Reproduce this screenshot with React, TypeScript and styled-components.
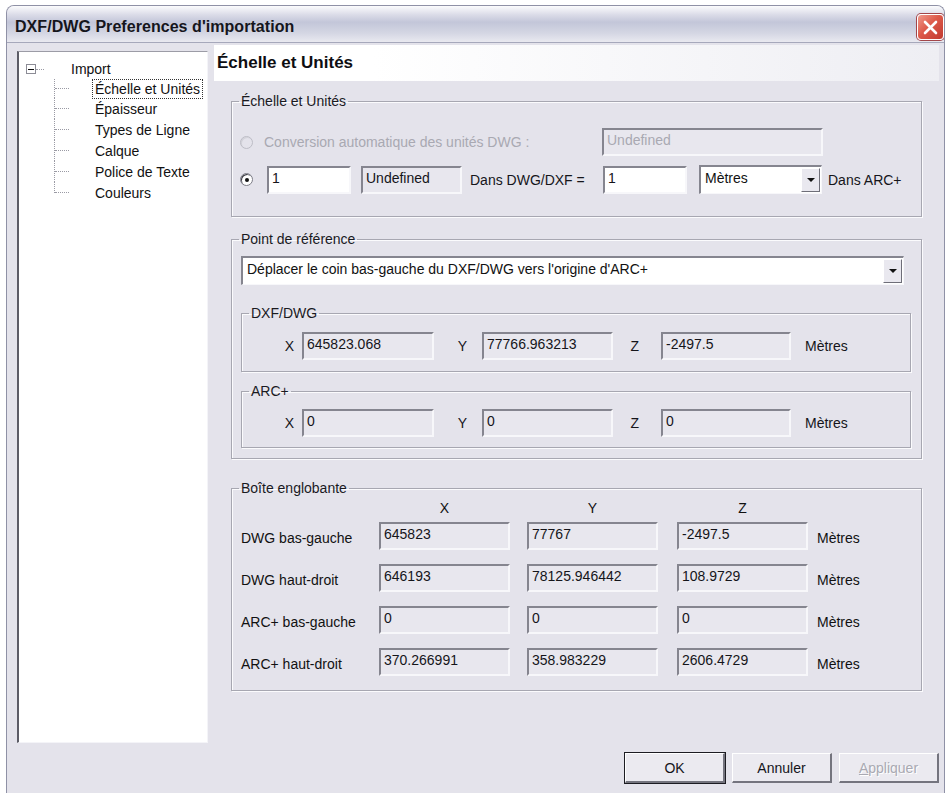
import React from "react";
import styled, { createGlobalStyle } from "styled-components";

const GlobalStyle = createGlobalStyle`
  html, body {
    margin: 0;
    padding: 0;
    background: #ffffff;
  }
  body {
    font-family: "Liberation Sans", Arial, sans-serif;
    font-size: 14px;
    color: #111111;
  }
`;

const Window = styled.div`
  box-sizing: border-box;
  margin: 5px 3px 0 6px;
  width: 939px;
  height: 788px;
  border: 1px solid #8f91a6;
  border-bottom: none;
  border-radius: 8px 8px 0 0;
  overflow: hidden;
  display: flex;
  flex-direction: column;
  background: #e4e3eb;
`;

const TitleBar = styled.div`
  height: 36px;
  flex-shrink: 0;
  display: flex;
  align-items: center;
  justify-content: space-between;
  padding: 0 0 0 8px;
  background: linear-gradient(
    to bottom,
    #fbfbfd 0%,
    #dadbe7 25%,
    #c3c6d9 45%,
    #d4d6e3 75%,
    #e9e9f0 100%
  );
  border-bottom: 1px solid #a6a8bb;
`;

const Title = styled.div`
  margin-top: 5px;
  font-size: 16px;
  font-weight: bold;
  color: #15151c;
  letter-spacing: 0.05px;
`;

const CloseButton = styled.div`
  width: 27px;
  height: 26px;
  margin-top: 6px;
  border-radius: 4px;
  border: 1px solid #ffffff;
  box-shadow: 0 0 0 1px #a2464a;
  background: linear-gradient(135deg, #f09a8c 0%, #dd5a4a 45%, #c23a30 100%);
  display: flex;
  align-items: center;
  justify-content: center;
  box-sizing: border-box;
`;

const Body = styled.div`
  flex: 1;
  display: flex;
  padding: 2px 0 0 10px;
`;

const Tree = styled.div`
  box-sizing: border-box;
  width: 191px;
  height: 692px;
  margin-top: 6px;
  background: #ffffff;
  border-top: 1px solid #9c9ca6;
  border-left: 2px solid #5c5c66;
  border-right: 1px solid #f4f4f8;
  border-bottom: 1px solid #f4f4f8;
  padding: 7px 0 0 7px;
  flex-shrink: 0;
`;

const TreeRoot = styled.div`
  display: flex;
  align-items: center;
  height: 20px;
`;

const Expander = styled.div`
  box-sizing: border-box;
  width: 10px;
  height: 10px;
  border: 1px solid #8c8c96;
  background: #fff;
  display: flex;
  align-items: center;
  justify-content: center;
  &::after {
    content: "";
    width: 6px;
    height: 1px;
    background: #111;
  }
`;

const DotsH = styled.div<{ $w: number }>`
  width: ${({ $w }) => $w}px;
  height: 0;
  border-top: 1px dotted #9a9aa4;
`;

const RootLabel = styled.div`
  margin-left: 27px;
`;

const Children = styled.div`
  margin-left: 28px;
  display: flex;
  flex-direction: column;
`;

const TreeItem = styled.div`
  position: relative;
  display: flex;
  align-items: center;
  height: 21px;
  border-left: 1px dotted #9a9aa4;
  &:first-child {
    height: 19px;
  }
  &:last-child {
    border-left-color: transparent;
  }
  &:last-child::before {
    content: "";
    position: absolute;
    left: -1px;
    top: 0;
    height: 50%;
    border-left: 1px dotted #9a9aa4;
  }
`;

const TreeText = styled.span<{ $focus?: boolean }>`
  margin-left: 24px;
  padding: 1px 2px;
  outline: ${({ $focus }) => ($focus ? "1px dotted #333" : "none")};
  line-height: 16px;
`;

const Panel = styled.div`
  margin-left: 6px;
  width: 725px;
  display: flex;
  flex-direction: column;
`;

const PanelHeader = styled.div`
  height: 36px;
  line-height: 36px;
  padding-left: 3px;
  font-size: 17px;
  font-weight: bold;
  color: #0e0e12;
  background: linear-gradient(to right, #ffffff 0%, #ffffff 22%, #eeeef3 100%);
`;

const Group = styled.fieldset<{ $mt: number; $w: number; $ml: number }>`
  box-sizing: border-box;
  margin: ${({ $mt }) => $mt}px 0 0 ${({ $ml }) => $ml}px;
  width: ${({ $w }) => $w}px;
  padding: 0;
  border: 1px solid #a7a7b1;
  box-shadow: inset 1px 1px 0 #fbfbfd, 1px 1px 0 #fbfbfd;
  min-width: 0;
`;

const Legend = styled.legend<{ $ml: number }>`
  margin-left: ${({ $ml }) => $ml}px;
  padding: 0 2px;
  line-height: 16px;
  font-size: 14px;
  color: #1a1a1f;
`;

const GroupContent = styled.div<{ $pad: string }>`
  padding: ${({ $pad }) => $pad};
  display: flex;
  flex-direction: column;
`;

const Row = styled.div<{ $mt?: number }>`
  display: flex;
  align-items: center;
  margin-top: ${({ $mt }) => $mt ?? 0}px;
`;

const Radio = styled.div<{ $checked?: boolean; $disabled?: boolean }>`
  box-sizing: border-box;
  width: 13px;
  height: 13px;
  border-radius: 50%;
  flex-shrink: 0;
  background: ${({ $disabled }) => ($disabled ? "#e4e3eb" : "#ffffff")};
  border: 1px solid ${({ $disabled }) => ($disabled ? "#bdbdc6" : "#7c7c86")};
  box-shadow: inset 1px 1px 0 ${({ $disabled }) => ($disabled ? "#d2d2d9" : "#404048")};
  display: flex;
  align-items: center;
  justify-content: center;
  &::after {
    content: "";
    width: 4px;
    height: 4px;
    border-radius: 50%;
    background: ${({ $checked }) => ($checked ? "#111" : "transparent")};
  }
`;

const Label = styled.span<{ $w?: number; $disabled?: boolean; $align?: string; $pr?: number; $pl?: number; $ml?: number }>`
  flex-shrink: 0;
  ${({ $w }) => ($w ? `width: ${$w}px;` : "")}
  text-align: ${({ $align }) => $align ?? "left"};
  padding-right: ${({ $pr }) => $pr ?? 0}px;
  padding-left: ${({ $pl }) => $pl ?? 0}px;
  margin-left: ${({ $ml }) => $ml ?? 0}px;
  box-sizing: border-box;
  color: ${({ $disabled }) => ($disabled ? "#a9a9b2" : "#15151a")};
  white-space: nowrap;
`;

const Field = styled.div<{ $w: number; $ml?: number; $variant?: "edit" | "readonly" | "disabled" }>`
  box-sizing: border-box;
  width: ${({ $w }) => $w}px;
  height: 28px;
  flex-shrink: 0;
  margin-left: ${({ $ml }) => $ml ?? 0}px;
  padding: 2px 0 0 3px;
  line-height: 17px;
  white-space: nowrap;
  overflow: hidden;
  border-top: 2px solid #85858f;
  border-left: 2px solid #85858f;
  border-right: 2px solid #f7f7fa;
  border-bottom: 2px solid #f7f7fa;
  background: ${({ $variant }) => ($variant === "edit" ? "#ffffff" : "#e8e7ee")};
  color: ${({ $variant }) => ($variant === "disabled" ? "#a9a9b2" : "#15151a")};
`;

const Select = styled.div<{ $w: number; $ml?: number }>`
  box-sizing: border-box;
  width: ${({ $w }) => $w}px;
  height: 29px;
  flex-shrink: 0;
  margin-left: ${({ $ml }) => $ml ?? 0}px;
  display: flex;
  align-items: stretch;
  background: #ffffff;
  border-top: 2px solid #85858f;
  border-left: 2px solid #85858f;
  border-right: 1px solid #f7f7fa;
  border-bottom: 1px solid #f7f7fa;
`;

const SelectText = styled.div`
  flex: 1;
  padding: 3px 0 0 4px;
  line-height: 17px;
  white-space: nowrap;
`;

const SelectArrow = styled.div`
  box-sizing: border-box;
  width: 19px;
  margin: 1px 1px 1px 0;
  background: #e9e8ef;
  border-top: 1px solid #ffffff;
  border-left: 1px solid #ffffff;
  border-right: 1px solid #6e6e78;
  border-bottom: 1px solid #6e6e78;
  display: flex;
  align-items: center;
  justify-content: center;
  &::after {
    content: "";
    border-left: 4px solid transparent;
    border-right: 4px solid transparent;
    border-top: 4px solid #111;
  }
`;

const BoxGrid = styled.div`
  display: grid;
  grid-template-columns: 138px 148px 150px 140px auto;
  align-items: center;
`;

const ColHead = styled.div`
  width: 131px;
  text-align: center;
  height: 16px;
  line-height: 16px;
`;

const Cell = styled.div<{ $first?: boolean }>`
  margin-top: ${({ $first }) => ($first ? 6 : 14)}px;
`;

const RowLabel = styled(Cell)`
  padding-top: 4px;
  white-space: nowrap;
`;

const Footer = styled.div`
  display: flex;
  justify-content: flex-end;
  gap: 7px;
  margin-top: 62px;
`;

const Button = styled.div<{ $default?: boolean; $disabled?: boolean }>`
  box-sizing: border-box;
  width: 100px;
  height: 30px;
  display: flex;
  align-items: center;
  justify-content: center;
  background: #ebeaf0;
  border-top: 1px solid #ffffff;
  border-left: 1px solid #ffffff;
  border-right: 2px solid #74747e;
  border-bottom: 2px solid #74747e;
  box-shadow: ${({ $default }) => ($default ? "0 0 0 1px #1c1c22" : "none")};
  color: ${({ $disabled }) => ($disabled ? "#a9a9b2" : "#15151a")};
  text-shadow: ${({ $disabled }) => ($disabled ? "1px 1px 0 #ffffff" : "none")};
`;

const treeItems = [
  "Échelle et Unités",
  "Épaisseur",
  "Types de Ligne",
  "Calque",
  "Police de Texte",
  "Couleurs",
];

const boxRows = [
  { label: "DWG bas-gauche", x: "645823", y: "77767", z: "-2497.5" },
  { label: "DWG haut-droit", x: "646193", y: "78125.946442", z: "108.9729" },
  { label: "ARC+ bas-gauche", x: "0", y: "0", z: "0" },
  { label: "ARC+ haut-droit", x: "370.266991", y: "358.983229", z: "2606.4729" },
];

function CoordRow({ x, y, z }: { x: string; y: string; z: string }) {
  return (
    <Row>
      <Label $w={60} $align="right" $pr={8}>
        X
      </Label>
      <Field $w={132} $variant="readonly">{x}</Field>
      <Label $w={48} $align="right" $pr={15}>
        Y
      </Label>
      <Field $w={131} $variant="readonly">{y}</Field>
      <Label $w={48} $align="right" $pr={22}>
        Z
      </Label>
      <Field $w={130} $variant="readonly">{z}</Field>
      <Label $ml={14}>Mètres</Label>
    </Row>
  );
}

export default function App() {
  return (
    <>
      <GlobalStyle />
      <Window>
        <TitleBar>
          <Title>DXF/DWG Preferences d'importation</Title>
          <CloseButton>
            <svg width="15" height="15" viewBox="0 0 15 15">
              <path d="M2 2 L13 13 M13 2 L2 13" stroke="#ffffff" strokeWidth="2.6" strokeLinecap="round" />
            </svg>
          </CloseButton>
        </TitleBar>
        <Body>
          <Tree>
            <TreeRoot>
              <Expander />
              <DotsH $w={8} />
              <RootLabel>Import</RootLabel>
            </TreeRoot>
            <Children>
              {treeItems.map((item, i) => (
                <TreeItem key={item}>
                  <DotsH $w={14} />
                  <TreeText $focus={i === 0}>{item}</TreeText>
                </TreeItem>
              ))}
            </Children>
          </Tree>
          <Panel>
            <PanelHeader>Échelle et Unités</PanelHeader>

            <Group $mt={12} $ml={17} $w={691}>
              <Legend $ml={7}>Échelle et Unités</Legend>
              <GroupContent $pad="19px 0 22px 8px">
                <Row>
                  <Radio $disabled />
                  <Label $w={349} $disabled $pl={11}>
                    Conversion automatique des unités DWG :
                  </Label>
                  <Field $w={221} $variant="disabled">Undefined</Field>
                </Row>
                <Row $mt={9}>
                  <Radio $checked />
                  <Field $w={84} $ml={14} $variant="edit">
                    1
                  </Field>
                  <Field $w={101} $ml={10} $variant="readonly">
                    Undefined
                  </Field>
                  <Label $w={141} $pl={8}>
                    Dans DWG/DXF =
                  </Label>
                  <Field $w={84} $variant="edit">1</Field>
                  <Select $w={123} $ml={12}>
                    <SelectText>Mètres</SelectText>
                    <SelectArrow />
                  </Select>
                  <Label $pl={6}>Dans ARC+</Label>
                </Row>
              </GroupContent>
            </Group>

            <Group $mt={14} $ml={17} $w={691}>
              <Legend $ml={7}>Point de référence</Legend>
              <GroupContent $pad="9px 0 10px 9px">
                <Select $w={663}>
                  <SelectText>Déplacer le coin bas-gauche du DXF/DWG vers l'origine d'ARC+</SelectText>
                  <SelectArrow />
                </Select>
                <Group $mt={20} $ml={0} $w={670}>
                  <Legend $ml={7}>DXF/DWG</Legend>
                  <GroupContent $pad="11px 0 11px 0">
                    <CoordRow x="645823.068" y="77766.963213" z="-2497.5" />
                  </GroupContent>
                </Group>
                <Group $mt={11} $ml={0} $w={670}>
                  <Legend $ml={7}>ARC+</Legend>
                  <GroupContent $pad="10px 0 10px 0">
                    <CoordRow x="0" y="0" z="0" />
                  </GroupContent>
                </Group>
              </GroupContent>
            </Group>

            <Group $mt={21} $ml={17} $w={691}>
              <Legend $ml={7}>Boîte englobante</Legend>
              <GroupContent $pad="4px 0 14px 9px">
                <BoxGrid>
                  <div />
                  <ColHead>X</ColHead>
                  <ColHead>Y</ColHead>
                  <ColHead>Z</ColHead>
                  <div />
                  {boxRows.map((r, i) => (
                    <React.Fragment key={r.label}>
                      <RowLabel $first={i === 0}>{r.label}</RowLabel>
                      <Cell $first={i === 0}>
                        <Field $w={131} $variant="readonly">{r.x}</Field>
                      </Cell>
                      <Cell $first={i === 0}>
                        <Field $w={131} $variant="readonly">{r.y}</Field>
                      </Cell>
                      <Cell $first={i === 0}>
                        <Field $w={131} $variant="readonly">{r.z}</Field>
                      </Cell>
                      <RowLabel $first={i === 0}>Mètres</RowLabel>
                    </React.Fragment>
                  ))}
                </BoxGrid>
              </GroupContent>
            </Group>

            <Footer>
              <Button $default>OK</Button>
              <Button>Annuler</Button>
              <Button $disabled>
                <u>A</u>ppliquer
              </Button>
            </Footer>
          </Panel>
        </Body>
      </Window>
    </>
  );
}
